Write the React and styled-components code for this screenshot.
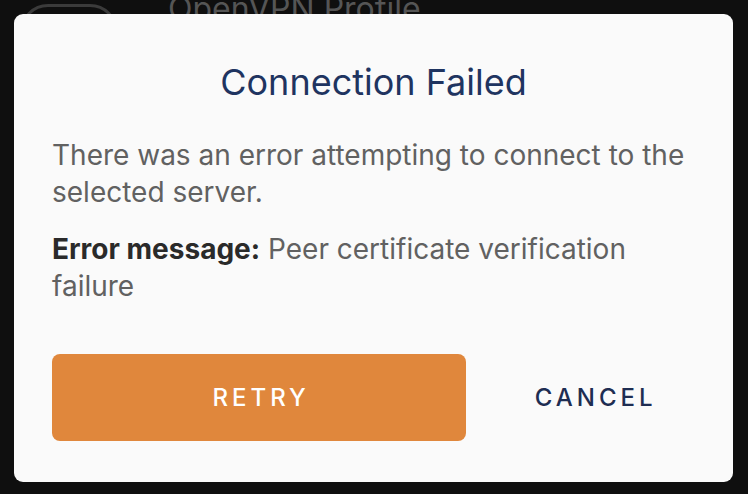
import React from "react";
import styled, { createGlobalStyle } from "styled-components";

const Global = createGlobalStyle`
  html, body { margin: 0; padding: 0; background: #0f0f0f; }
  body { width: 748px; height: 494px; overflow: hidden; font-family: Inter, "Noto Sans", sans-serif; }
  * { box-sizing: border-box; }
`;

const Page = styled.div`
  position: relative;
  width: 748px;
  height: 494px;
  background: #0f0f0f;
  overflow: hidden;
`;

const ProfileHeader = styled.div`
  display: flex;
  align-items: flex-start;
  gap: 50px;
  padding-left: 20px;
  padding-top: 4px;
`;

const ProfileIcon = styled.div`
  width: 98px;
  height: 80px;
  border: 3px solid #3b3b3b;
  border-radius: 28px;
`;

const ProfileName = styled.div`
  margin-top: -14px;
  font-size: 32px;
  color: #555555;
  line-height: 38px;
`;

const Overlay = styled.div`
  position: absolute;
  inset: 0;
  display: flex;
  align-items: flex-start;
  justify-content: center;
  padding-top: 14px;
`;

const Dialog = styled.div`
  width: 719px;
  height: 468px;
  margin-left: -1px;
  background: #fafafa;
  border-radius: 9px;
  padding: 46px 38px 0 38px;
  display: flex;
  flex-direction: column;
`;

const Title = styled.h2`
  margin: 0;
  text-align: center;
  font-size: 36px;
  line-height: 44px;
  font-weight: 400;
  color: #1f3460;
`;

const Paragraph = styled.p`
  margin: ${(p) => p.$top}px 0 0 0;
  font-size: 28px;
  line-height: 36.5px;
  color: #616161;
`;

const Strong = styled.strong`
  font-weight: 700;
  color: #2a2a2a;
`;

const Actions = styled.div`
  margin-top: 50px;
  display: flex;
  align-items: center;
  gap: 24px;
`;

const RetryButton = styled.button`
  width: 417px;
  height: 87px;
  border: none;
  border-radius: 8px;
  background: #e0873c;
  color: #ffffff;
  font-family: Inter, "Noto Sans", sans-serif;
  font-size: 24px;
  font-weight: 500;
  letter-spacing: 4px;
  padding: 0 0 0 4px;
  cursor: pointer;
`;

const CancelButton = styled.button`
  width: 206px;
  height: 87px;
  border: none;
  background: transparent;
  color: #1e2d52;
  font-family: Inter, "Noto Sans", sans-serif;
  font-size: 24px;
  font-weight: 500;
  letter-spacing: 4px;
  padding: 0 0 0 6px;
  cursor: pointer;
`;

export default function App() {
  return (
    <Page>
      <Global />
      <ProfileHeader>
        <ProfileIcon />
        <ProfileName>OpenVPN Profile</ProfileName>
      </ProfileHeader>
      <Overlay>
        <Dialog>
          <Title>Connection Failed</Title>
          <Paragraph $top={33}>
            There was an error attempting to connect to the selected server.
          </Paragraph>
          <Paragraph $top={21}>
            <Strong>Error message:</Strong> Peer certificate verification failure
          </Paragraph>
          <Actions>
            <RetryButton>RETRY</RetryButton>
            <CancelButton>CANCEL</CancelButton>
          </Actions>
        </Dialog>
      </Overlay>
    </Page>
  );
}
